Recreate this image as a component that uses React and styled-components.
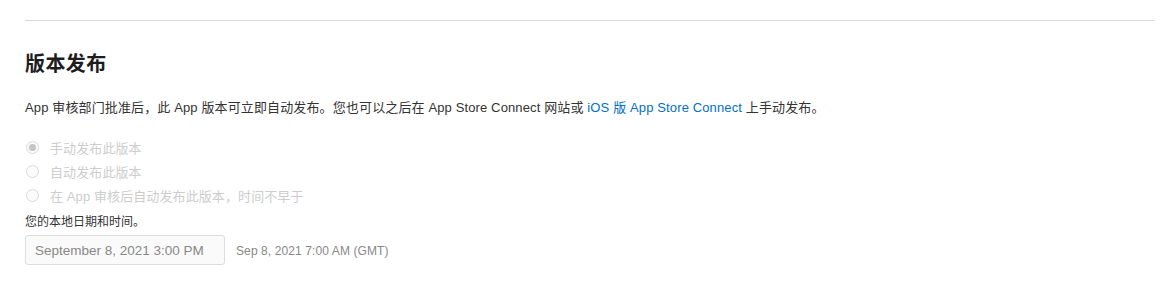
import React from "react";
import styled, { createGlobalStyle } from "styled-components";

const Global = createGlobalStyle`
  html, body { margin: 0; padding: 0; background: #fff; }
  body {
    font-family: "Liberation Sans", "Noto Sans CJK SC", sans-serif;
    color: #333;
    -webkit-font-smoothing: antialiased;
  }
`;

const Page = styled.div`
  padding: 20px 16px 0 25px;
`;

const Divider = styled.hr`
  margin: 0;
  border: 0;
  border-top: 1px solid #d6d6d6;
`;

const Heading = styled.h2`
  margin: 31px 0 0;
  font-size: 20px;
  line-height: 24px;
  font-weight: 700;
  letter-spacing: 0.4px;
  color: #1d1d1f;
`;

const Para = styled.p`
  margin: 23px 0 0;
  font-size: 13px;
  line-height: 18px;
  letter-spacing: 0.13px;
  color: #333;
`;

const Link = styled.a`
  color: #0070c9;
  text-decoration: none;
`;

const RadioList = styled.div`
  margin-top: 21px;
  display: flex;
  flex-direction: column;
  gap: 6px;
`;

const RadioRow = styled.label`
  display: flex;
  align-items: center;
  gap: 11px;
  height: 18px;
  font-size: 13px;
  letter-spacing: 0.1px;
  color: #cdcdcd;
  padding-left: 1px;
`;

const Circle = styled.span`
  box-sizing: border-box;
  width: 13px;
  height: 13px;
  border-radius: 50%;
  border: 1px solid #d9d9d9;
  background: #fbfbfb;
  display: flex;
  align-items: center;
  justify-content: center;
  &::after {
    content: "";
    width: 7px;
    height: 7px;
    border-radius: 50%;
    background: ${(p) => (p.$checked ? "#c4c4c4" : "transparent")};
  }
`;

const FieldLabel = styled.div`
  margin-top: 10px;
  font-size: 12px;
  line-height: 16px;
  color: #333;
`;

const DateRow = styled.div`
  margin-top: 5px;
  display: flex;
  align-items: center;
  gap: 11px;
`;

const DateBox = styled.div`
  box-sizing: border-box;
  width: 200px;
  height: 30px;
  border: 1px solid #dcdcdc;
  border-radius: 3px;
  background: #fafafa;
  padding: 0 9px;
  display: flex;
  align-items: center;
  font-size: 13.5px;
  color: #888;
`;

const Gmt = styled.span`
  font-size: 12px;
  letter-spacing: 0.1px;
  color: #888;
  padding-top: 1px;
`;

export default function App() {
  return (
    <>
      <Global />
      <Page>
        <Divider />
        <Heading>版本发布</Heading>
        <Para>
          App 审核部门批准后，此 App 版本可立即自动发布。您也可以之后在 App Store Connect 网站或{" "}
          <Link href="#">iOS 版 App Store Connect</Link> 上手动发布。
        </Para>
        <RadioList>
          <RadioRow>
            <Circle $checked />
            手动发布此版本
          </RadioRow>
          <RadioRow>
            <Circle />
            自动发布此版本
          </RadioRow>
          <RadioRow>
            <Circle />
            在 App 审核后自动发布此版本，时间不早于
          </RadioRow>
        </RadioList>
        <FieldLabel>您的本地日期和时间。</FieldLabel>
        <DateRow>
          <DateBox>September 8, 2021 3:00 PM</DateBox>
          <Gmt>Sep 8, 2021 7:00 AM (GMT)</Gmt>
        </DateRow>
      </Page>
    </>
  );
}
